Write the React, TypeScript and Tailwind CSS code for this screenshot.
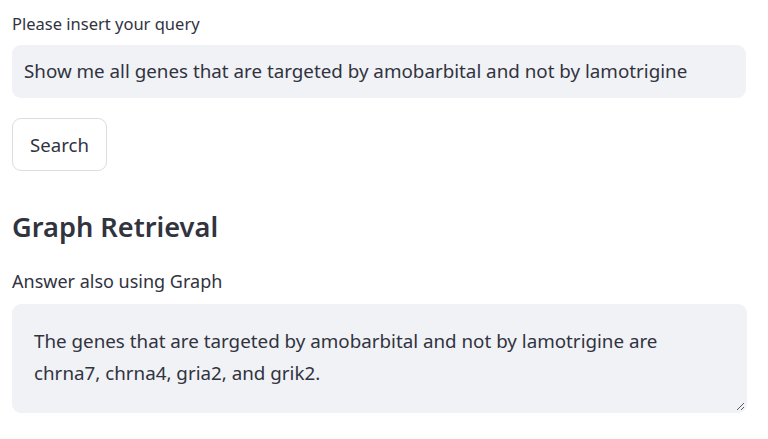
import React from "react";

export default function App() {
  return (
    <div
      className="w-[768px] h-[439px] bg-white text-[#31333F] px-3 overflow-hidden"
      style={{ fontFamily: '"Noto Sans", "Open Sans", sans-serif' }}
    >
      <div className="pt-[12px] text-[16.5px] leading-[24px]">Please insert your query</div>
      <div className="mt-[9px] h-[53px] w-[734px] rounded-[9px] bg-[#f0f2f6] flex items-center pl-[12px] text-[18.8px]">
        Show me all genes that are targeted by amobarbital and not by lamotrigine
      </div>
      <button className="mt-[20px] h-[53px] w-[95px] rounded-[9px] border border-[#dcdde2] bg-white text-[18.6px] flex items-center justify-center">
        Search
      </button>
      <h3 className="mt-[38px] text-[27.2px] font-semibold leading-[36px]">Graph Retrieval</h3>
      <div className="mt-[24px] text-[18px] leading-[24px]">Answer also using Graph</div>
      <div className="relative mt-[11px] h-[109px] w-[735px] rounded-[9px] bg-[#f0f2f6] pl-[22px] pr-[60px] pt-[21px] text-[18.8px] leading-[32px]">
        The genes that are targeted by amobarbital and not by lamotrigine are chrna7, chrna4, gria2, and grik2.
        <svg className="absolute right-[2px] bottom-[2px]" width="10" height="10" viewBox="0 0 10 10">
          <path d="M9 2 L2 9 M9 6 L6 9" stroke="#5a5c66" strokeWidth="1" fill="none" />
        </svg>
      </div>
    </div>
  );
}
